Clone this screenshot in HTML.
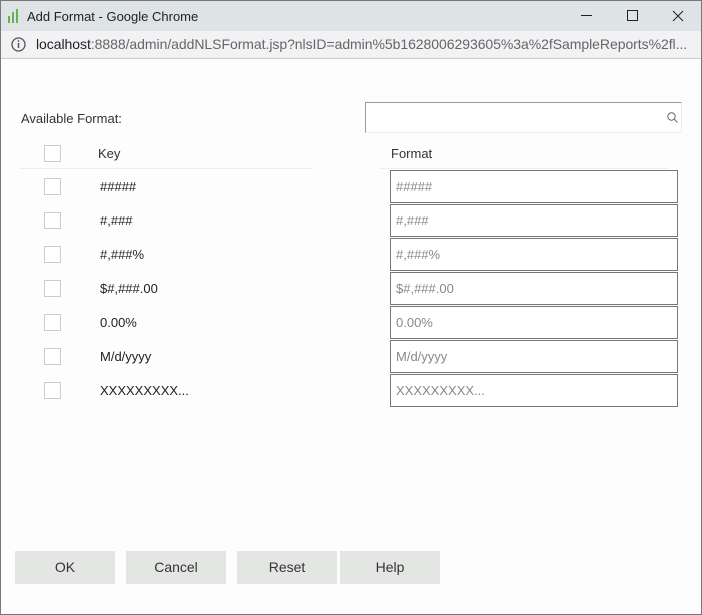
<html><head><style>
body{margin:0;width:702px;height:615px;overflow:hidden;font-family:"Liberation Sans",sans-serif;background:#fcfdfc;position:relative}
.abs{position:absolute}
.frame{position:absolute;left:0;top:0;width:700px;height:613px;border:1px solid #777;}
.title{left:1px;top:1px;width:700px;height:30px;background:#dee3e6;font-size:13px;color:#222}
.addr{left:1px;top:31px;width:700px;height:27px;background:#f2f2f5;border-bottom:1px solid #ccc;font-size:14px;color:#666}
.cb{position:absolute;left:44px;width:15px;height:15px;border:1px solid #ccc;background:#fff}
.key{position:absolute;left:100px;font-size:13px;color:#222}
.inp{position:absolute;left:390px;width:281px;height:31px;border:1px solid #777;font-size:13px;color:#888;line-height:31px;padding-left:5px;box-sizing:content-box;background:#fff}
.btn{position:absolute;top:551px;width:100px;height:33px;background:#e4e6e4;font-size:14px;color:#333;text-align:center;line-height:33px}
</style></head><body>
<div class="frame"></div>
<div class="abs title">
<svg class="abs" style="left:6px;top:7px" width="14" height="16"><g stroke="#6ab04c" stroke-width="2"><line x1="2" y1="8" x2="2" y2="15"/><line x1="6" y1="4" x2="6" y2="15"/><line x1="10" y1="1" x2="10" y2="15"/></g></svg>
<span class="abs" style="left:26px;top:8px">Add Format - Google Chrome</span>
<span class="abs" style="left:580px;top:14px;width:11px;height:1px;background:#222"></span>
<span class="abs" style="left:626px;top:9px;width:9px;height:9px;border:1px solid #222"></span>
<svg class="abs" style="left:671px;top:9px" width="12" height="12"><path d="M1 1L11 11M11 1L1 11" stroke="#222"/></svg>
</div>
<div class="abs addr">
<svg class="abs" style="left:10px;top:6px" width="15" height="15"><circle cx="7.5" cy="7.5" r="6.5" fill="none" stroke="#555" stroke-width="1.3"/><line x1="7.5" y1="6" x2="7.5" y2="11" stroke="#555" stroke-width="1.5"/><circle cx="7.5" cy="4" r="0.9" fill="#555"/></svg>
<span class="abs" style="left:35px;top:5px;letter-spacing:-0.05px"><span style="color:#222">localhost</span>:8888/admin/addNLSFormat.jsp?nlsID=admin%5b1628006293605%3a%2fSampleReports%2fl...</span>
</div>
<div class="abs" style="left:21px;top:111px;font-size:13px;color:#333">Available Format:</div>
<div class="abs" style="left:365px;top:102px;width:315px;height:29px;border:1px solid #999;border-right:1px solid #eee;border-bottom:1px solid #eee;background:#fff"></div>
<svg class="abs" style="left:667px;top:112px" width="11" height="11"><circle cx="4.5" cy="4.5" r="3.7" fill="none" stroke="#666"/><line x1="7.2" y1="7.2" x2="10.5" y2="10.5" stroke="#666"/></svg>
<div class="cb" style="top:145px"></div>
<div class="key" style="left:98px;top:146px;color:#333">Key</div>
<div class="key" style="left:391px;top:146px;color:#333">Format</div>
<div class="abs" style="left:20px;top:168px;width:293px;height:1px;background:#eee"></div>
<div class="abs" style="left:380px;top:168px;width:288px;height:1px;background:#eee"></div>
<div class="cb" style="top:178px"></div><div class="key" style="top:179px">#####</div><div class="inp" style="top:170px">#####</div>
<div class="cb" style="top:212px"></div><div class="key" style="top:213px">#,###</div><div class="inp" style="top:204px">#,###</div>
<div class="cb" style="top:246px"></div><div class="key" style="top:247px">#,###%</div><div class="inp" style="top:238px">#,###%</div>
<div class="cb" style="top:280px"></div><div class="key" style="top:281px">$#,###.00</div><div class="inp" style="top:272px">$#,###.00</div>
<div class="cb" style="top:314px"></div><div class="key" style="top:315px">0.00%</div><div class="inp" style="top:306px">0.00%</div>
<div class="cb" style="top:348px"></div><div class="key" style="top:349px">M/d/yyyy</div><div class="inp" style="top:340px">M/d/yyyy</div>
<div class="cb" style="top:382px"></div><div class="key" style="top:383px">XXXXXXXXX...</div><div class="inp" style="top:374px">XXXXXXXXX...</div>
<div class="btn" style="left:15px">OK</div>
<div class="btn" style="left:126px">Cancel</div>
<div class="btn" style="left:237px">Reset</div>
<div class="btn" style="left:340px">Help</div>
</body></html>
